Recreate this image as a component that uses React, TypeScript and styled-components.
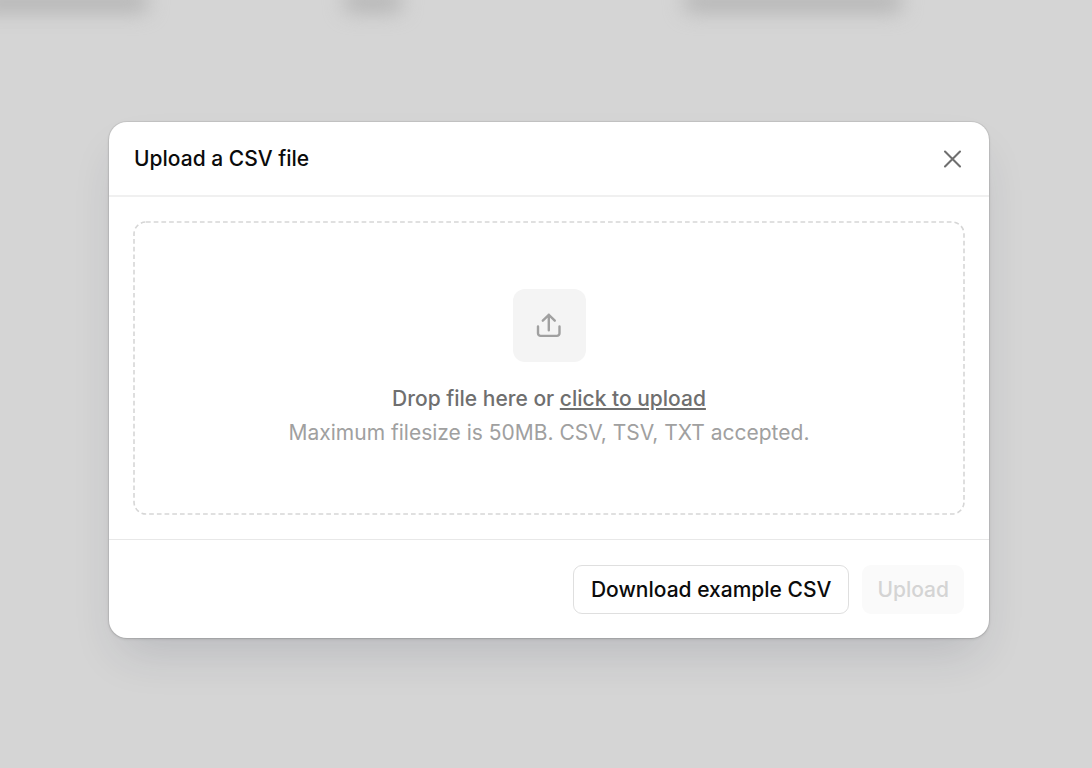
import React, { useRef } from "react";
import styled, { createGlobalStyle } from "styled-components";

const GlobalStyle = createGlobalStyle`
  *, *::before, *::after { box-sizing: border-box; }
  body {
    margin: 0;
    background: #d5d5d5;
    font-family: Inter, "Liberation Sans", sans-serif;
    font-size: 21px;
    line-height: 28px;
    -webkit-font-smoothing: antialiased;
  }
  button { font: inherit; cursor: pointer; }
`;

const Page = styled.div`
  position: relative;
  min-height: 100vh;
  overflow: hidden;
  padding: 122px 103px 96px 109px;
`;

const BlurredRow = styled.div`
  position: absolute;
  top: -8px;
  left: -24px;
  right: 0;
  display: grid;
  grid-template-columns: 368px 340px 1fr;
  filter: blur(10px);
`;

const BlurredCell = styled.span<{ $width: number }>`
  width: ${(p) => p.$width}px;
  height: 20px;
  border-radius: 8px;
  background: #b3b3b3;
`;

const Dialog = styled.section`
  position: relative;
  border-radius: 18px;
  background: #fff;
  box-shadow:
    0 0 0 1px rgba(0, 0, 0, 0.06),
    0 1px 3px rgba(0, 0, 0, 0.14),
    0 24px 48px -12px rgba(28, 40, 64, 0.16);
`;

const Header = styled.header`
  display: flex;
  align-items: center;
  justify-content: space-between;
  padding: 23px 24px 22px 25px;
  border-bottom: 2px solid #f0f0f0;
`;

const Title = styled.h1`
  margin: 0;
  color: #0b0b0b;
  font-size: 21px;
  font-weight: 500;
  line-height: 28px;
`;

const CloseButton = styled.button`
  display: flex;
  padding: 0;
  border: 0;
  background: none;
  color: #6f6f6f;
`;

const Body = styled.div`
  padding: 24px;
`;

const DropZone = styled.div`
  position: relative;
  display: flex;
  flex-direction: column;
  align-items: center;
  padding: 68px 24px;
  border-radius: 12px;
  text-align: center;
`;

const DashedOutline = styled.svg`
  position: absolute;
  inset: 0;
  width: 100%;
  height: 100%;
  overflow: visible;
  pointer-events: none;
`;

const OutlineRect = styled.rect`
  x: 1px;
  y: 1px;
  width: calc(100% - 2px);
  height: calc(100% - 2px);
  fill: none;
  stroke: #d6d6d6;
`;

const IconTile = styled.span`
  display: flex;
  align-items: center;
  justify-content: center;
  width: 73px;
  height: 73px;
  margin-bottom: 23px;
  border-radius: 12px;
  background: #f4f4f4;
  color: #a0a0a0;
`;

const Prompt = styled.p`
  margin: 0 0 6px;
  color: #6f6f6f;
  font-weight: 500;
`;

const BrowseButton = styled.button`
  padding: 0;
  border: 0;
  background: none;
  color: inherit;
  text-decoration: underline;
  text-decoration-thickness: 2px;
  text-underline-offset: 2px;
`;

const Hint = styled.p`
  margin: 0;
  color: #a0a0a0;
`;

const Footer = styled.footer`
  display: flex;
  justify-content: flex-end;
  gap: 13px;
  padding: 25px 25px 24px;
  border-top: 1px solid #e8e8e8;
`;

const ActionButton = styled.button<{ $outlined?: boolean }>`
  height: 49px;
  padding: 0 ${(p) => (p.$outlined ? 17 : 14)}px;
  border: 1px solid ${(p) => (p.$outlined ? "#dfdfdf" : "transparent")};
  border-radius: 9px;
  background: #fff;
  color: #0b0b0b;
  font-weight: 500;

  &:disabled {
    background: #fafafa;
    color: #d4d4d4;
    cursor: default;
  }
`;

export default function App() {
  const fileInput = useRef<HTMLInputElement>(null);

  return (
    <>
      <GlobalStyle />
      <Page>
        <BlurredRow aria-hidden="true">
          <BlurredCell $width={172} />
          <BlurredCell $width={58} />
          <BlurredCell $width={218} />
        </BlurredRow>
        <Dialog role="dialog" aria-modal="true" aria-labelledby="upload-title">
          <Header>
            <Title id="upload-title">Upload a CSV file</Title>
            <CloseButton type="button" aria-label="Close">
              <svg width="25" height="25" viewBox="0 0 25 25" fill="none" stroke="currentColor" strokeWidth="2.1" strokeLinecap="round" aria-hidden="true">
                <path d="M5 4.5l15 15M20 4.5l-15 15" />
              </svg>
            </CloseButton>
          </Header>
          <Body>
            <DropZone>
              <DashedOutline aria-hidden="true">
                <OutlineRect rx="12" strokeWidth="1.6" strokeDasharray="4.7 3" />
              </DashedOutline>
              <IconTile>
                <svg width="26" height="26" viewBox="0 0 26 26" fill="none" stroke="currentColor" strokeWidth="2.4" strokeLinecap="round" strokeLinejoin="round" aria-hidden="true">
                  <path d="M2 13.5v6.8a2.6 2.6 0 0 0 2.6 2.6h16.3a2.6 2.6 0 0 0 2.6-2.6v-6.8" />
                  <path d="M12.8 17.2V1.8M6.8 7.7l6-5.9 6 5.9" />
                </svg>
              </IconTile>
              <Prompt>
                Drop file here or{" "}
                <BrowseButton type="button" onClick={() => fileInput.current?.click()}>
                  click to upload
                </BrowseButton>
              </Prompt>
              <Hint>Maximum filesize is 50MB. CSV, TSV, TXT accepted.</Hint>
              <input ref={fileInput} type="file" accept=".csv,.tsv,.txt" aria-label="Choose a file" hidden />
            </DropZone>
          </Body>
          <Footer>
            <ActionButton type="button" $outlined>
              Download example CSV
            </ActionButton>
            <ActionButton type="button" disabled>
              Upload
            </ActionButton>
          </Footer>
        </Dialog>
      </Page>
    </>
  );
}
